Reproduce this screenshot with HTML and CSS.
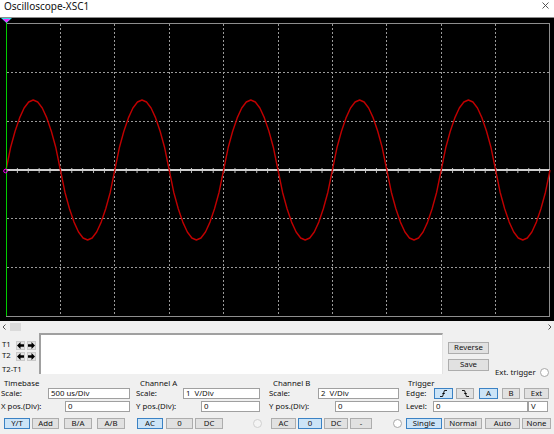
FILE: index.html
```html
<!DOCTYPE html>
<html>
<head>
<meta charset="utf-8">
<title>Oscilloscope-XSC1</title>
<link rel="stylesheet" href="styles.css">
</head>
<body>
<div class="titlebar">
  <span class="title">Oscilloscope-XSC1</span>
  <svg class="close" viewBox="0 0 7 7"><path d="M0.5 0.5L6.5 6.5M6.5 0.5L0.5 6.5" stroke="#444" stroke-width="0.9" fill="none"/></svg>
</div>

<div class="screen">
  <svg class="scope" width="554" height="303" viewBox="0 18 554 303" shape-rendering="crispEdges">
    <defs>
      <pattern id="tk" x="6" y="0" width="10.88" height="400" patternUnits="userSpaceOnUse">
        <rect x="0" y="0" width="1" height="400" fill="#bdbdbd"/>
      </pattern>
      <polyline id="per" fill="none" points="0,0 4.53,-22.2 9.07,-38.8 13.6,-52.1 18.13,-62 22.67,-68 27.2,-70 31.73,-68 36.27,-62 40.8,-52.1 45.33,-38.8 49.87,-22.2 54.4,0 58.93,22.2 63.47,38.8 68,52.1 72.53,62 77.07,68 81.6,70 86.13,68 90.67,62 95.2,52.1 99.73,38.8 104.27,22.2 108.8,0"/>
    </defs>
    <g stroke="#9a9a9a" stroke-width="1" stroke-dasharray="2 2" fill="none">
      <path d="M60.5 24V316M114.5 24V316M169.5 24V316M223.5 24V316M278.5 24V316M332.5 24V316M386.5 24V316M441.5 24V316M495.5 24V316"/>
      <path d="M7 72.5H549M7 121.5H549M7 218.5H549M7 267.5H549"/>
    </g>
    <rect x="6.5" y="23.5" width="543" height="293" fill="none" stroke="#8e8e8e"/>
    <rect x="6" y="168" width="544" height="5" fill="url(#tk)"/>
    <path d="M6 170H550" stroke="#cfcfcf" stroke-width="2"/>
    <g transform="translate(6,170)" stroke="#c00000" stroke-width="1.4" fill="none" shape-rendering="auto" stroke-linejoin="round">
      <use href="#per"/>
      <use href="#per" x="108.8"/>
      <use href="#per" x="217.6"/>
      <use href="#per" x="326.4"/>
      <use href="#per" x="435.2"/>
    </g>
    <path d="M6.5 19V316" stroke="#00cc00" stroke-width="1"/>
    <g shape-rendering="auto">
      <polygon points="1,18 12,18 6.5,23" fill="#33d6e6"/>
      <polygon points="3,19 10,19 6.5,22.5" fill="#ff22ff"/>
      <circle cx="5.5" cy="171" r="1.8" fill="none" stroke="#ff00ff" stroke-width="1"/>
    </g>
  </svg>
</div>

<div class="hscroll">
  <svg class="sarr" viewBox="0 0 4 6"><path d="M3.5 0.5L1 3L3.5 5.5" stroke="#555" fill="none"/></svg>
  <span class="thumb"></span>
  <svg class="sarr right" viewBox="0 0 4 6"><path d="M0.5 0.5L3 3L0.5 5.5" stroke="#555" fill="none"/></svg>
</div>

<div class="cursors">
  <div class="tlabels">
    <div class="trow">
      <span class="tl">T1</span>
      <span class="ab"><svg viewBox="0 0 7 7"><path d="M0 3.5L3.5 0V2.2H7V4.8H3.5V7Z" fill="#000"/></svg></span>
      <span class="ab"><svg viewBox="0 0 7 7"><path d="M7 3.5L3.5 0V2.2H0V4.8H3.5V7Z" fill="#000"/></svg></span>
    </div>
    <div class="trow">
      <span class="tl">T2</span>
      <span class="ab"><svg viewBox="0 0 7 7"><path d="M0 3.5L3.5 0V2.2H7V4.8H3.5V7Z" fill="#000"/></svg></span>
      <span class="ab"><svg viewBox="0 0 7 7"><path d="M7 3.5L3.5 0V2.2H0V4.8H3.5V7Z" fill="#000"/></svg></span>
    </div>
    <div class="tdiff">T2-T1</div>
  </div>
  <div class="readout"></div>
  <div class="side">
    <div class="sbtns">
      <span class="btn sb">Reverse</span>
      <span class="btn sb">Save</span>
    </div>
    <div class="ext"><span>Ext. trigger</span><span class="radio"></span></div>
  </div>
</div>

<div class="controls">
  <div class="grp tb">
    <div class="ghead">Timebase</div>
    <div class="row r1"><span class="lbl">Scale:</span><span class="inp w82">500 us/Div</span></div>
    <div class="row r2"><span class="lbl">X pos.(Div):</span><span class="inp w65">0</span></div>
    <div class="row r3 tbb">
      <span class="btn on w26">Y/T</span>
      <span class="btn w27 ml2">Add</span>
      <span class="btn w28 ml5">B/A</span>
      <span class="btn w28 ml5">A/B</span>
    </div>
  </div>

  <div class="grp cha">
    <div class="ghead">Channel A</div>
    <div class="row r1"><span class="lbl">Scale:</span><span class="inp w77">1  V/Div</span></div>
    <div class="row r2"><span class="lbl">Y pos.(Div):</span><span class="inp w59">0</span></div>
    <div class="row r3">
      <span class="btn on w26 ml3">AC</span>
      <span class="btn w27 ml3">0</span>
      <span class="btn w28 ml2">DC</span>
      <span class="radio off ml30"></span>
    </div>
  </div>

  <div class="grp chb">
    <div class="ghead">Channel B</div>
    <div class="row r1"><span class="lbl">Scale:</span><span class="inp w81">2  V/Div</span></div>
    <div class="row r2"><span class="lbl">Y pos.(Div):</span><span class="inp w64">0</span></div>
    <div class="row r3">
      <span class="btn w25 ml3">AC</span>
      <span class="btn on w24 ml2">0</span>
      <span class="btn w24 ml2">DC</span>
      <span class="btn w22 ml2">-</span>
      <span class="radio ml21"></span>
    </div>
  </div>

  <div class="grp trg">
    <div class="ghead">Trigger</div>
    <div class="row r1">
      <span class="lbl w30">Edge:</span>
      <span class="btn on w19"><svg class="edge" viewBox="0 0 9 7"><path d="M1 6.5H3.6L5.4 0.5H8M3.3 3.5H5.8" stroke="#000" stroke-width="0.9" fill="none"/></svg></span>
      <span class="btn w18 ml3"><svg class="edge" viewBox="0 0 9 7"><path d="M1 0.5H3.6L5.4 6.5H8M3.2 3.5H5.8" stroke="#000" stroke-width="0.9" fill="none"/></svg></span>
      <span class="btn on w19 ml5">A</span>
      <span class="btn w18 ml4">B</span>
      <span class="btn w25 ml4">Ext</span>
    </div>
    <div class="row r2">
      <span class="lbl w29">Level:</span>
      <span class="inp fixed w95">0</span>
      <span class="inp fixed w20 ml1">V</span>
    </div>
    <div class="row r3">
      <span class="btn on w36 ml2">Single</span>
      <span class="btn w38 ml2">Normal</span>
      <span class="btn w35 ml3">Auto</span>
      <span class="btn w29 ml2">None</span>
    </div>
  </div>
</div>
</body>
</html>
```

FILE: styles.css
```css
* { box-sizing: border-box; margin: 0; padding: 0; }
html, body { width: 554px; height: 434px; overflow: hidden; }
body {
  background: #f0f0f0;
  font-family: "Noto Sans", "Open Sans", sans-serif;
  font-size: 7.8px;
  line-height: 1;
  color: #111;
}

/* title bar */
.titlebar {
  height: 17px;
  background: #fff;
  display: flex;
  justify-content: space-between;
  align-items: flex-start;
  padding: 1px 5px 0 4px;
}
.title { font-size: 10px; line-height: 11px; }
.close { width: 7px; height: 7px; margin-top: 1px; }

/* scope screen */
.screen { height: 304px; background: #000; border-top: 1px solid #8c8c8c; }
.scope { display: block; }

/* horizontal scrollbar */
.hscroll { height: 12px; display: flex; align-items: center; padding: 0 2px 0 2px; }
.sarr { width: 4px; height: 6px; }
.thumb { width: 11px; height: 8px; background: #dadada; margin-left: 4px; }
.sarr.right { margin-left: auto; }

/* cursor area */
.cursors { height: 43px; display: flex; }
.tlabels { width: 39px; padding: 7px 0 0 2px; }
.trow { height: 10px; display: flex; align-items: center; margin-bottom: 1px; }
.tl { width: 14px; }
.ab {
  width: 9px; height: 9px;
  background: #e1e1e1;
  border: 1px solid #cacaca;
  display: flex; align-items: center; justify-content: center;
  margin-right: 2px;
}
.ab svg { width: 7px; height: 7px; }
.tdiff { margin-top: 5px; }
.readout {
  width: 404px; height: 41px;
  background: #fff;
  border-top: 2px solid #a0a0a0;
  border-left: 2px solid #a0a0a0;
  border-right: 1px solid #e4e4e4;
}
.side { flex: 1; display: flex; padding: 9px 0 0 5px; }
.sbtns { display: flex; flex-direction: column; gap: 5px; }
.btn.sb { width: 41px; height: 12px; }
.ext {
  display: flex; align-items: center; gap: 4px;
  align-self: flex-end;
  margin: 0 0 -1px 6px;
}

/* generic controls */
.btn {
  height: 11px;
  background: #e1e1e1;
  border: 1px solid #adadad;
  display: flex; align-items: center; justify-content: center;
  flex: none;
}
.btn.on { background: #cce4f7; border-color: #3b82c4; }
.inp {
  height: 11px;
  background: #fff;
  border: 1px solid #a0a0a0;
  padding-left: 2px;
  display: flex; align-items: center;
  margin-left: auto;
  white-space: pre;
  flex: none;
}
.inp.fixed { margin-left: 0; }
.radio {
  width: 9px; height: 9px;
  border-radius: 50%;
  background: #fff;
  border: 1px solid #a8a8a8;
  flex: none;
}
.radio.off { background: #f4f4f4; border-color: #d0d0d0; }
.edge { width: 9px; height: 7px; }

/* control groups */
.controls { height: 58px; display: flex; padding-top: 2px; }
.grp { display: flex; flex-direction: column; }
.ghead { height: 10px; line-height: 10px; }
.row { height: 11px; display: flex; align-items: center; }
.r2 { margin-top: 2px; }
.r3 { margin-top: 6px; }

.tb { width: 134px; padding-right: 4px; }
.tb .ghead { padding-left: 4px; }
.tb .lbl { padding-left: 1px; }
.tbb { padding-left: 4px; }

.cha { width: 134px; padding-right: 8px; }
.cha .ghead { padding-left: 6px; }
.cha .lbl { padding-left: 2px; }

.chb { width: 136px; padding-right: 5px; }
.chb .ghead { padding-left: 5px; }
.chb .lbl { padding-left: 1px; }

.trg { width: 150px; }
.trg .ghead { padding-left: 4px; }
.trg .lbl { padding-left: 2px; flex: none; }

/* widths */
.w18 { width: 18px; } .w19 { width: 19px; } .w20 { width: 20px; }
.w22 { width: 22px; } .w24 { width: 24px; } .w25 { width: 25px; }
.w26 { width: 26px; } .w27 { width: 27px; } .w28 { width: 28px; }
.w29 { width: 29px; } .w30 { width: 30px; } .w35 { width: 35px; }
.w36 { width: 36px; } .w38 { width: 38px; } .w59 { width: 59px; }
.w64 { width: 64px; } .w65 { width: 65px; } .w77 { width: 77px; }
.w81 { width: 81px; } .w82 { width: 82px; } .w95 { width: 95px; }

/* margins */
.ml1 { margin-left: 1px; } .ml2 { margin-left: 2px; } .ml3 { margin-left: 3px; }
.ml4 { margin-left: 4px; } .ml5 { margin-left: 5px; } .ml21 { margin-left: 21px; }
.ml30 { margin-left: 30px; }
```
